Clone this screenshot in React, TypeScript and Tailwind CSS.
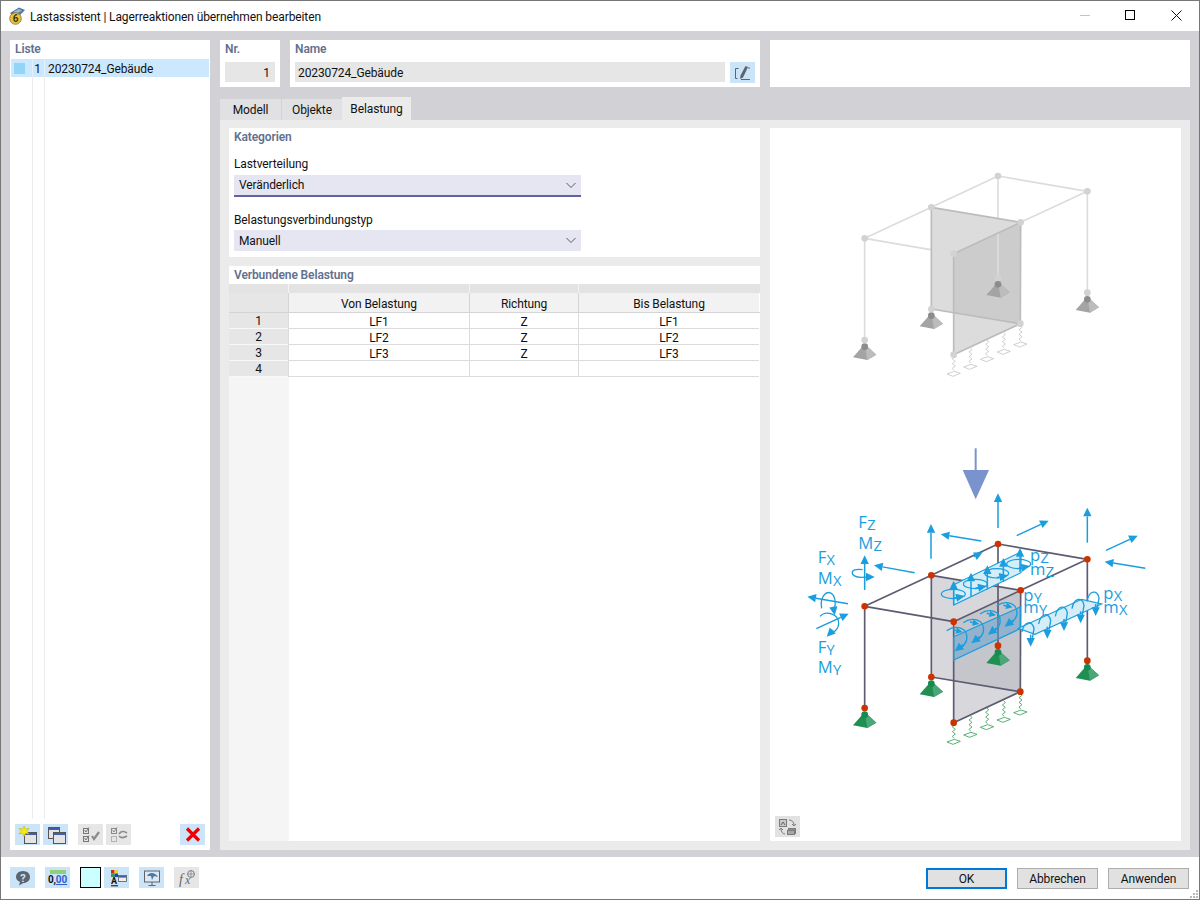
import React from 'react';

const BLUE = '#1a9ede';

// coordinates of the frame, in 3x picture units
const N = {
  a: [224, 499], b: [424, 406], c: [624, 312], d: [892, 358], e: [692, 451], f: [491, 545],
  a2: [224, 804], b2: [424, 711], c2: [624, 617], d2: [892, 662], e2: [691, 755], f2: [491, 848],
};
type Key = keyof typeof N;

const EDGES: [Key, Key][] = [
  ['a', 'b'], ['b', 'c'], ['c', 'd'], ['d', 'e'], ['f', 'a'],
  ['a', 'a2'], ['c', 'c2'], ['d', 'd2'],
];
const PANEL_EDGES: [Key, Key][] = [
  ['e', 'f'], ['b', 'b2'], ['e', 'e2'], ['f', 'f2'], ['b', 'e'], ['b2', 'e2'], ['f2', 'e2'],
];

const pts = (...keys: Key[]) => keys.map(k => N[k].join(',')).join(' ');

const Support: React.FC<{ x: number; y: number; dark: string; light: string; ball: string }> = ({ x, y, dark, light, ball }) => (
  <g>
    <polygon points={`${x - 35},${y + 52} ${x},${y + 12} ${x + 35},${y + 44} ${x + 8},${y + 60}`} fill={dark} />
    <polygon points={`${x},${y + 12} ${x + 35},${y + 44} ${x + 8},${y + 60}`} fill={light} />
    <circle cx={x} cy={y + 20} r={10} fill={ball} />
  </g>
);

const Spring: React.FC<{ x: number; y: number; color: string }> = ({ x, y, color }) => (
  <g fill="none" stroke={color} strokeWidth={2.4}>
    <path d={`M${x} ${y} l5 6 l-9 7 l9 7 l-9 7 l9 7 l-9 7 l5 6`} />
    <polygon points={`${x - 20},${y + 58} ${x + 2},${y + 50} ${x + 20},${y + 56} ${x - 2},${y + 65}`} />
  </g>
);

const Frame: React.FC<{
  line: string; node: string; nodeR: number; panel: string; panelEdge: string;
  dark: string; light: string; ball: string; spring: string; lineW: number;
}> = ({ line, node, nodeR, panel, panelEdge, dark, light, ball, spring, lineW }) => (
  <g>
    <polygon points={pts('b', 'e', 'e2', 'b2')} fill={panel} fillOpacity={0.55} />
    <polygon points={pts('f', 'e', 'e2', 'f2')} fill={panel} fillOpacity={0.55} />
    {EDGES.map(([p, q], i) => (
      <line key={i} x1={N[p][0]} y1={N[p][1]} x2={N[q][0]} y2={N[q][1]} stroke={line} strokeWidth={lineW} />
    ))}
    {PANEL_EDGES.map(([p, q], i) => (
      <line key={i} x1={N[p][0]} y1={N[p][1]} x2={N[q][0]} y2={N[q][1]} stroke={panelEdge} strokeWidth={lineW} />
    ))}
    <Support x={224} y={804} dark={dark} light={light} ball={ball} />
    <Support x={424} y={711} dark={dark} light={light} ball={ball} />
    <Support x={624} y={617} dark={dark} light={light} ball={ball} />
    <Support x={892} y={662} dark={dark} light={light} ball={ball} />
    {[[491, 848], [541, 827], [591, 804], [641, 782], [691, 760]].map(([x, y], i) => (
      <Spring key={i} x={x} y={y} color={spring} />
    ))}
    {(['a', 'b', 'c', 'd', 'e', 'f', 'a2', 'b2', 'c2', 'd2', 'e2', 'f2'] as Key[]).map(k => (
      <circle key={k} cx={N[k][0]} cy={N[k][1]} r={nodeR} fill={node} />
    ))}
  </g>
);

const Arrow: React.FC<{ x1: number; y1: number; x2: number; y2: number; head?: number }> = ({ x1, y1, x2, y2, head = 26 }) => {
  const l = Math.hypot(x2 - x1, y2 - y1);
  const ux = (x2 - x1) / l;
  const uy = (y2 - y1) / l;
  const bx = x2 - ux * head;
  const by = y2 - uy * head;
  const w = head * 0.48;
  return (
    <g>
      <line x1={x1} y1={y1} x2={bx} y2={by} stroke={BLUE} strokeWidth={4.5} />
      <polygon points={`${x2},${y2} ${bx - uy * w},${by + ux * w} ${bx + uy * w},${by - ux * w}`} fill={BLUE} />
    </g>
  );
};

const Label: React.FC<{ x: number; y: number; main: string; sub: string }> = ({ x, y, main, sub }) => (
  <text x={x} y={y} fill={BLUE} fontSize={50} fontFamily="'Open Sans', sans-serif">
    {main}
    <tspan fontSize={44} dx={1} dy={6}>{sub}</tspan>
  </text>
);

const Arc: React.FC<{ d: string; w?: number }> = ({ d, w = 4 }) => (
  <path d={d} fill="none" stroke={BLUE} strokeWidth={w} />
);

const Loads: React.FC = () => (
  <g>
    {/* big load arrow */}
    <line x1={557} y1={25} x2={557} y2={95} stroke="#7b93cc" strokeWidth={6} />
    <polygon points="518,90 597,90 557,178" fill="#7b93cc" />

    {/* forces at the nodes */}
    <Arrow x1={624} y1={264} x2={624} y2={160} />
    <Arrow x1={892} y1={308} x2={892} y2={203} />
    <Arrow x1={423} y1={356} x2={423} y2={252} />
    <Arrow x1={574} y1={303} x2={452} y2={283} />
    <Arrow x1={680} y1={287} x2={776} y2={242} />
    <Arrow x1={948} y1={331} x2={1043} y2={287} />
    <Arrow x1={1066} y1={385} x2={944} y2={365} />
    <Arrow x1={374} y1={398} x2={252} y2={376} />
    <Arrow x1={224} y1={450} x2={224} y2={346} />
    <Arrow x1={174} y1={491} x2={52} y2={470} />
    <Arrow x1={79} y1={566} x2={176} y2={521} />
    <Arrow x1={552} y1={350} x2={578} y2={337} />

    {/* moment loops */}
    <Arc d="M218 389 C175 382 178 412 214 412 L240 411" />
    <Arrow x1={228} y1={411} x2={254} y2={411} />
    <Arc d="M95 505 C88 465 115 445 130 466 C140 482 135 505 130 512" />
    <Arrow x1={130} y1={500} x2={134} y2={526} />
    <Arc d="M90 529 C105 510 148 520 146 552 C145 568 130 578 122 582" />
    <Arrow x1={130} y1={570} x2={110} y2={590} />

    {/* pz strip */}
    <polygon points="491,434 693,336 693,398 491,495" fill="#d5edf9" stroke={BLUE} strokeWidth={3.5} />
    {[[491, 434], [543, 410], [592, 388], [640, 366], [690, 336]].map(([x, y], i) => (
      <Arrow key={i} x1={x} y1={y + 60} x2={x} y2={y - 12} />
    ))}
    {[[490, 462], [556, 432], [620, 400], [686, 372]].map(([x, y], i) => (
      <g key={i}>
        <ellipse cx={x} cy={y} rx={36} ry={14} fill="none" stroke={BLUE} strokeWidth={3.5} />
        <Arrow x1={x} y1={y + 13} x2={x + 34} y2={y + 6} />
      </g>
    ))}

    {/* py strip */}
    <polygon points="491,590 691,501 691,566 491,660" fill="#5f9fd0" fillOpacity={0.5} stroke={BLUE} strokeWidth={3.5} />
    {[[470, 572], [520, 548], [570, 522], [620, 498]].map(([x, y], i) => (
      <g key={i}>
        <Arc d={`M${x} ${y} C${x + 25} ${y - 18} ${x + 66} ${y - 12} ${x + 60} ${y + 28} C${x + 56} ${y + 42} ${x + 50} ${y + 46} ${x + 40} ${y + 54}`} />
        <Arrow x1={x + 50} y1={y + 42} x2={x + 24} y2={y + 62} />
        <Arrow x1={x + 20} y1={y - 2} x2={x + 48} y2={y + 4} head={20} />
      </g>
    ))}

    {/* px strip */}
    <polygon points="685,565 875,478 935,492 735,583" fill="#d5edf9" stroke={BLUE} strokeWidth={3.5} />
    {[[710, 572], [760, 548], [810, 525], [860, 502], [905, 480]].map(([x, y], i) => (
      <g key={i}>
        <Arc d={`M${x - 14} ${y + 4} C${x - 8} ${y - 30} ${x + 18} ${y - 32} ${x + 22} ${y - 6} L${x + 16} ${y + 30}`} />
        <Arrow x1={x + 12} y1={y + 12} x2={x + 12} y2={y + 48} />
      </g>
    ))}

    <Label x={205} y={263} main="F" sub="Z" />
    <Label x={205} y={326} main="M" sub="Z" />
    <Label x={83} y={370} main="F" sub="X" />
    <Label x={83} y={433} main="M" sub="X" />
    <Label x={83} y={638} main="F" sub="Y" />
    <Label x={83} y={700} main="M" sub="Y" />
    <Label x={720} y={364} main="p" sub="Z" />
    <Label x={720} y={406} main="m" sub="Z" />
    <Label x={700} y={482} main="p" sub="Y" />
    <Label x={700} y={520} main="m" sub="Y" />
    <Label x={940} y={476} main="p" sub="X" />
    <Label x={940} y={518} main="m" sub="X" />
  </g>
);

const Diagram: React.FC = () => (
  <svg viewBox="0 0 1233 2139" className="block w-full h-full">
    <g transform="translate(60 936)">
      <g transform="translate(0 -1104)">
        <Frame line="#dcdcdc" node="#d2d2d2" nodeR={10} panel="#c0c0c0" panelEdge="#bcbcbc" lineW={5}
          dark="#a4a4a4" light="#bcbcbc" ball="#8c8c8c" spring="#c4c4c4" />
      </g>
      <Frame line="#5d5b72" node="#cc3300" nodeR={10} panel="#b6b6c0" panelEdge="#5d5b72" lineW={5}
        dark="#1f8f52" light="#4aa878" ball="#168a50" spring="#2f9e55" />
      <Loads />
    </g>
  </svg>
);

const Tb: React.FC<{ on?: boolean; children?: React.ReactNode; className?: string }> = ({ on = true, children, className = '' }) => (
  <div className={`w-[25px] h-[21px] flex items-center justify-center shrink-0 ${on ? 'bg-[#cce4f7]' : 'bg-[#e6e6e6]'} ${className}`}>
    {children}
  </div>
);

const SmallWin: React.FC<{ x: number; y: number; w?: number; h?: number }> = ({ x, y, w = 11, h = 10 }) => (
  <g>
    <rect x={x + 0.5} y={y + 0.5} width={w} height={h} fill="#e4e4e4" stroke="#555" />
    <rect x={x + 1} y={y + 1} width={w - 1} height={2} fill="#3c5fb4" />
  </g>
);

const Section: React.FC<{ children: React.ReactNode }> = ({ children }) => (
  <div className="text-[12px] leading-[16px] font-semibold text-[#62708f]">{children}</div>
);

const Select: React.FC<{ value: string; active?: boolean }> = ({ value, active }) => (
  <div className={`w-[347px] flex items-center justify-between pl-[5px] pr-[4px] bg-[#e6e6f2] ${active ? 'h-[22px] border-b-2 border-[#6362a0]' : 'h-[21px]'}`}>
    <span className={active ? '' : 'pt-px'}>{value}</span>
    <svg width="12" height="12" viewBox="0 0 12 12" className="mb-px"><path d="M1.5 4 L6 8.5 L10.5 4" fill="none" stroke="#5a5a5a" /></svg>
  </div>
);

const COLS = 'grid grid-cols-[59px_181px_109px_181px]';
const ROWS = [['1', 'LF1', 'Z', 'LF1'], ['2', 'LF2', 'Z', 'LF2'], ['3', 'LF3', 'Z', 'LF3'], ['4', '', '', '']];

const App: React.FC = () => (
  <div className="w-[1200px] h-[900px] flex flex-col bg-white border border-[#777] text-[12px] leading-[16px] text-[#111] overflow-hidden font-['Roboto',sans-serif] tracking-[-0.11px]">
    {/* title bar */}
    <div className="h-[30px] flex items-center shrink-0">
      <svg width="18" height="18" viewBox="0 0 18 18" className="ml-[7px]">
        <path d="M2 6 L11 0.5 L17 3 L12 8 L5 9 Z" fill="#54779f" />
        <path d="M5 5 L11 2 L14 3.5 L9 6.5 Z" fill="#a3b9d2" />
        <circle cx="7.5" cy="11.5" r="5.8" fill="#e8c23a" stroke="#8a7420" strokeWidth="0.8" />
        <text x="7.5" y="15" textAnchor="middle" fontSize="10" fontWeight="700" fill="#3a3a20">6</text>
      </svg>
      <span className="ml-[4px] text-[12px] pt-px">Lastassistent | Lagerreaktionen übernehmen bearbeiten</span>
      <div className="ml-auto flex items-center mr-[17px] mb-[2px]">
        <div className="w-[10px] h-px bg-[#c4c4c4] mr-[35px]" />
        <div className="w-[10px] h-[10px] border border-black mr-[36px]" />
        <svg width="11" height="11" viewBox="0 0 11 11"><path d="M0.5 0.5 L10.5 10.5 M10.5 0.5 L0.5 10.5" stroke="#111" /></svg>
      </div>
    </div>

    {/* main area */}
    <div className="h-[826px] shrink-0 bg-[#d1d1d6] flex pt-[9px] pl-[9px] pr-[9px] pb-[7px] gap-[10px]">
      {/* list */}
      <div className="w-[200px] bg-white flex flex-col relative">
        <div className="pl-[5px] h-[19px] pt-px"><Section>Liste</Section></div>
        <div className="mx-px h-[18px] bg-[#cce8ff] flex">
          <div className="w-[21px] pl-[3px] flex items-center"><div className="w-[11px] h-[11px] bg-[#92d5f7]" /></div>
          <div className="w-[12px] border-l border-[#e2f1fc] flex items-center justify-end pr-[3px] pt-[2px]">1</div>
          <div className="border-l border-[#e2f1fc] flex items-center pl-[3px] pt-[2px]">20230724_Gebäude</div>
        </div>
        <div className="flex-1 flex pl-[22px]">
          <div className="w-[13px] border-l border-r border-[#ececec] h-[742px]" />
        </div>
        <div className="flex h-[21px] mb-[5px] ml-[5px] items-center">
          <Tb>
            <svg width="20" height="18" viewBox="0 0 20 18">
              <SmallWin x={6} y={6} w={12} h={11} />
              <path d="M6 0 L7.5 3 L11 2.4 L8.9 5.2 L11 8 L7.5 7.4 L6 10.5 L4.5 7.4 L1 8 L3.1 5.2 L1 2.4 L4.5 3 Z" fill="#f7e815" stroke="#b8a800" strokeWidth="0.5" />
            </svg>
          </Tb>
          <Tb className="ml-[3px]">
            <svg width="20" height="18" viewBox="0 0 20 18">
              <SmallWin x={2} y={1} w={11} h={11} />
              <SmallWin x={7} y={6} w={12} h={11} />
            </svg>
          </Tb>
          <Tb on={false} className="ml-[10px]">
            <svg width="20" height="18" viewBox="0 0 20 18" fill="none" stroke="#777">
              <rect x="2.5" y="2.5" width="5" height="5" /><rect x="2.5" y="10.5" width="5" height="5" />
              <path d="M3.5 4 L5 6 L8 1.5 M3.5 12 L5 14 L8 9.5" />
              <path d="M11 10 L13 13 L18 6" strokeWidth="2.2" stroke="#8c8c8c" />
            </svg>
          </Tb>
          <Tb on={false} className="ml-[3px]">
            <svg width="20" height="18" viewBox="0 0 20 18" fill="none" stroke="#8a8a8a">
              <rect x="2.5" y="2.5" width="5" height="5" /><rect x="2.5" y="10.5" width="5" height="5" stroke="#b4b4b4" />
              <path d="M3.5 4 L5 6 L8 1.5" />
              <path d="M10 8 C12 5 15 5 18 7 M18 10 C15 12 12 12 10 10" strokeWidth="1.6" />
            </svg>
          </Tb>
          <Tb className="ml-[49px]">
            <svg width="16" height="15" viewBox="0 0 16 15"><path d="M2 1.5 L14 13.5 M14 1.5 L2 13.5" stroke="#f00000" strokeWidth="3.2" /></svg>
          </Tb>
        </div>
      </div>

      {/* right side */}
      <div className="w-[970px] flex flex-col">
        <div className="flex gap-[10px] h-[47px]">
          <div className="w-[60px] bg-white pl-[5px] pt-px">
            <Section>Nr.</Section>
            <div className="mt-[5px] w-[50px] h-[20px] bg-[#e6e6e6] flex items-center justify-end pr-[5px] pt-[2px]">1</div>
          </div>
          <div className="w-[470px] bg-white pl-[5px] pt-px">
            <Section>Name</Section>
            <div className="mt-[5px] flex">
              <div className="w-[430px] h-[20px] bg-[#e6e6e6] flex items-center pl-[3px] pt-[2px]">20230724_Gebäude</div>
              <Tb className="ml-[5px]">
                <svg width="18" height="16" viewBox="0 0 18 16" fill="none">
                  <path d="M4.5 3.5 H1.5 V13.5 H3.5" stroke="#5d6470" />
                  <path d="M7 14.5 H16" stroke="#5d6470" />
                  <path d="M11.5 1 L14 2 L9 12.5 L6 14 L6.5 10.5 Z" fill="#5d6470" />
                  <path d="M14 3 H16" stroke="#5d6470" />
                </svg>
              </Tb>
            </div>
          </div>
          <div className="w-[420px] bg-white" />
        </div>

        {/* tabs */}
        <div className="flex items-end h-[23px] mt-[10px] shrink-0">
          <div className="w-[61px] h-[21px] bg-[#e1e1e3] flex items-center justify-center">Modell</div>
          <div className="w-[60px] h-[21px] ml-px bg-[#e1e1e3] flex items-center justify-center">Objekte</div>
          <div className="w-[69px] h-[23px] bg-[#ebebeb] flex items-center justify-center">Belastung</div>
        </div>

        {/* tab body */}
        <div className="flex-1 bg-[#ebebeb] flex pl-[9px] pr-[9px] pt-[8px] pb-[9px] gap-[10px] min-h-0">
          <div className="w-[531px] flex flex-col gap-[9px]">
            <div className="h-[129px] bg-white pl-[5px] pt-px shrink-0">
              <Section>Kategorien</Section>
              <div className="mt-[11px] mb-[3px]">Lastverteilung</div>
              <Select value="Veränderlich" active />
              <div className="mt-[15px] mb-[2px]">Belastungsverbindungstyp</div>
              <Select value="Manuell" />
            </div>
            <div className="flex-1 bg-white flex flex-col min-h-0">
              <div className="pl-[5px] h-[18px] pt-px"><Section>Verbundene Belastung</Section></div>
              <div className={`${COLS} h-[9px] bg-[#e3e3e3]`}>
                <div /><div className="border-l border-[#f4f4f4]" /><div className="border-l border-[#f4f4f4]" /><div className="border-l border-[#f4f4f4]" />
              </div>
              <div className={`${COLS} h-[20px] border-b border-[#d4d4d4]`}>
                <div className="bg-[#e6e6e6]" />
                {['Von Belastung', 'Richtung', 'Bis Belastung'].map(h => (
                  <div key={h} className="bg-[#f2f2f2] border-l border-[#d4d4d4] flex items-center justify-center pt-[2px]">{h}</div>
                ))}
              </div>
              {ROWS.map(r => (
                <div key={r[0]} className={`${COLS} grid-rows-[16px] h-[16px] shrink-0`}>
                  <div className="bg-[#e6e6e6] border-b border-[#f8f8f8] flex items-center justify-center pt-px">{r[0]}</div>
                  {r.slice(1).map((c, i) => (
                    <div key={i} className="border-l border-b border-[#dcdcdc] flex items-center justify-center pt-[3px]">{c}</div>
                  ))}
                </div>
              ))}
              <div className="flex-1 w-[60px] bg-[#f5f5f5]" />
            </div>
          </div>

          {/* graphic */}
          <div className="w-[411px] bg-white relative">
            <Diagram />
            <div className="absolute left-[5px] bottom-[4px] w-[25px] h-[21px] bg-[#e2e2e2] flex items-center justify-center">
              <svg width="20" height="18" viewBox="0 0 20 18" fill="none" stroke="#7c7c7c">
                <rect x="1.5" y="1.5" width="7" height="7" fill="#c8c8c8" />
                <path d="M3 7 L5 4 L7 7" stroke="#666" />
                <rect x="10.5" y="10.5" width="7" height="5" fill="#8e8e8e" />
                <rect x="9.5" y="12.5" width="7" height="4" fill="#a8a8a8" />
                <path d="M11 2 C14 2 16 4 16 7 M7 16 C5 16 3 14 3 11" />
                <path d="M14 6 L16 8 L18 6 M1 12 L3 10 L5 12" />
              </svg>
            </div>
          </div>
        </div>
      </div>
    </div>

    {/* footer */}
    <div className="flex-1 flex items-start pt-[10px] pl-[9px] pr-[10px] relative">
      <Tb>
        <svg width="18" height="18" viewBox="0 0 18 18">
          <path d="M9 2 C13.5 2 16 4.8 16 8 C16 11.5 13 14 9.5 14 L5 16.5 L6 13 C3.5 12 2 10.3 2 8 C2 4.8 4.5 2 9 2 Z" fill="#5d6470" />
          <text x="9" y="12.5" textAnchor="middle" fontSize="11" fontWeight="700" fill="#cce4f7">?</text>
        </svg>
      </Tb>
      <Tb className="ml-[10px]">
        <div className="flex flex-col items-center w-[21px]">
          <div className="w-[16px] h-[4px] bg-[#8fce7a]" />
          <div className="text-[10px] leading-[12px] font-bold">0,<span className="text-[#2f5fd0] underline">00</span></div>
        </div>
      </Tb>
      <div className="ml-[10px] w-[21px] h-[21px] bg-[#ccffff] border border-black" />
      <Tb className="ml-[3px]">
        <svg width="20" height="18" viewBox="0 0 20 18">
          <rect x="4" y="1" width="3.5" height="3.5" fill="#e02020" /><rect x="7.5" y="1" width="3.5" height="3.5" fill="#e8d820" />
          <rect x="4" y="4.5" width="3.5" height="3.5" fill="#30a030" /><rect x="7.5" y="4.5" width="3.5" height="3.5" fill="#2040c0" />
          <text x="7" y="15" textAnchor="middle" fontSize="9" fontWeight="700" fill="#111">A</text>
          <rect x="4" y="16" width="7" height="1.4" fill="#444" />
          <rect x="11.5" y="6.5" width="8" height="6" fill="#eee" stroke="#555" strokeWidth="0.8" />
          <rect x="12" y="7" width="7" height="1.6" fill="#3c5fb4" />
        </svg>
      </Tb>
      <Tb className="ml-[10px]">
        <svg width="20" height="18" viewBox="0 0 20 18">
          <rect x="2.5" y="2" width="15" height="11" fill="#dfe8f0" stroke="#5d6470" />
          <path d="M5 7 C7 3 13 3 16 8 L12 7 L10 11 L9 7 Z" fill="#4a78a8" />
          <path d="M10 13 V16 M6.5 16.5 H13.5" stroke="#5d6470" />
        </svg>
      </Tb>
      <Tb on={false} className="ml-[10px]">
        <svg width="20" height="18" viewBox="0 0 20 18">
          <text x="2" y="15" fontSize="14" fontStyle="italic" fontFamily="'Liberation Serif', serif" fill="#666">f</text>
          <text x="8" y="15" fontSize="12" fontStyle="italic" fontFamily="'Liberation Serif', serif" fill="#666">x</text>
          <circle cx="14" cy="5" r="3.4" fill="none" stroke="#7c7c7c" />
          <path d="M14 1.5 V8.5 M10.5 5 H17.5" stroke="#7c7c7c" strokeWidth="0.7" />
        </svg>
      </Tb>
      <div className="ml-auto flex gap-[10px] mt-px">
        <div className="w-[81px] h-[21px] bg-[#e1e1e1] border-2 border-[#0078d7] flex items-center justify-center">OK</div>
        <div className="w-[81px] h-[21px] bg-[#e1e1e1] border border-[#adadad] flex items-center justify-center">Abbrechen</div>
        <div className="w-[81px] h-[21px] bg-[#e1e1e1] border border-[#adadad] flex items-center justify-center">Anwenden</div>
      </div>
      <svg width="10" height="10" viewBox="0 0 10 10" className="absolute right-0 bottom-0" fill="#b8b8b8">
        <rect x="7" y="1" width="2" height="2" /><rect x="4" y="4" width="2" height="2" /><rect x="7" y="4" width="2" height="2" />
        <rect x="1" y="7" width="2" height="2" /><rect x="4" y="7" width="2" height="2" /><rect x="7" y="7" width="2" height="2" />
      </svg>
    </div>
  </div>
);

export default App;
